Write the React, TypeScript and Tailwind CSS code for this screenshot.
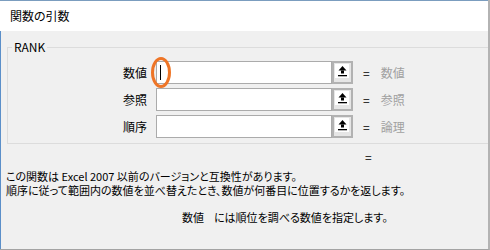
const args = [
    { label: "数値", result: "数値", active: true },
    { label: "参照", result: "参照", active: false },
    { label: "順序", result: "論理", active: false },
];

function RefButton() {
    return (
        <div className="ml-0 flex h-[23px] w-[21px] shrink-0 border-2 border-[#b2b2b2] bg-[#e6e6e6]">
            <div className="ml-px mt-px flex h-[14px] w-[14px] items-center justify-center bg-white">
                <svg width="9" height="11" viewBox="0 0 9 11" className="mt-px">
                    <polygon points="4.5,0 8.5,4.5 0.5,4.5" fill="#000" />
                    <rect x="3" y="4.5" width="3" height="3" fill="#000" />
                    <rect x="0" y="9" width="9" height="1.3" fill="#000" />
                </svg>
            </div>
        </div>
    );
}

export default function App() {
    return (
        <div className="flex h-[250px] w-[490px] flex-col overflow-hidden border-b border-r-2 border-b-[#a3a3a3] border-r-[#b3b3b3] bg-[#f0f0f0] font-['Noto_Sans_CJK_JP',sans-serif] text-[12px] text-black [font-feature-settings:'palt']">
            {/* title bar */}
            <div className="flex h-[31px] shrink-0 items-center border-t border-[#7b9dbf] bg-white pl-[10px]">
                関数の引数
            </div>

            <div className="flex-1 border-l border-[#5b8fc9]">
                <fieldset className="ml-[6px] mt-[9px] border border-r-0 border-[#dcdcdc] pb-[5px] pt-[7px]">
                    <legend className="ml-[4px] px-[2px] leading-[14px]">RANK</legend>
                    <div className="flex flex-col gap-[4px]">
                        {args.map((a) => (
                            <div key={a.label} className="flex h-[23px] items-center">
                                <span className="w-[139px] text-right">{a.label}</span>
                                <div className="relative ml-[9px] h-[23px] w-[176px] border border-[#ababab] bg-white">
                                    {a.active && (
                                        <>
                                            <div className="ml-[3px] mt-[3px] h-[15px] w-px bg-black" />
                                            <div className="absolute left-[-6px] top-[-5px] h-[31px] w-[20px] rounded-[50%] border-[3px] border-[#ee7527]" />
                                        </>
                                    )}
                                </div>
                                <RefButton />
                                <span className="ml-[10px]">=</span>
                                <span className="ml-[11px] text-[#a0a0a0]">{a.result}</span>
                            </div>
                        ))}
                    </div>
                </fieldset>

                <div className="mt-[6px] pl-[364px] leading-[14px]">=</div>

                <div className="mt-[5px] pl-[5px] text-[11px] leading-[14px]">
                    <p>この関数は Excel 2007 以前のバージョンと互換性があります。</p>
                    <p>順序に従って範囲内の数値を並べ替えたとき、数値が何番目に位置するかを返します。</p>
                </div>

                <div className="mt-[13px] flex pl-[181px] text-[11px] leading-[14px]">
                    <span>数値</span>
                    <span className="ml-[10px]">には順位を調べる数値を指定します。</span>
                </div>
            </div>
        </div>
    );
}
